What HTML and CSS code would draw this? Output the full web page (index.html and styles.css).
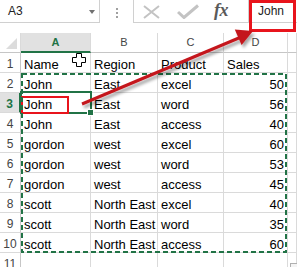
FILE: index.html
```html
<!DOCTYPE html>
<html>
<head>
<meta charset="utf-8">
<link rel="stylesheet" href="styles.css">
</head>
<body>
<div class="app">
  <div class="fbar">
    <div class="namebox"><span class="ref">A3</span><span class="dd"></span></div>
    <div class="dots"><i></i><i></i><i></i></div>
    <div class="formula">
      <div class="ficons">
        <svg class="ico-x" width="17" height="14" viewBox="0 0 17 14"><path d="M1 1 L16 13 M16 1 L1 13" stroke="#c3c3c3" stroke-width="2" fill="none"/></svg>
        <svg class="ico-check" width="22" height="15" viewBox="0 0 22 15"><path d="M1 8 L7 13.5 L21 1.5" stroke="#c3c3c3" stroke-width="3" fill="none"/></svg>
        <span class="fx">fx</span>
      </div>
      <div class="finput">John</div>
    </div>
  </div>

  <div class="sheet">
    <div class="corner"><span class="tri"></span></div>
    <div class="ch sel">A</div><div class="ch">B</div><div class="ch">C</div><div class="ch">D</div><div class="ch"></div>

    <div class="rh">1</div><div class="c">Name</div><div class="c">Region</div><div class="c">Product</div><div class="c">Sales</div><div class="c"></div>
    <div class="rh">2</div><div class="c">John</div><div class="c">East</div><div class="c">excel</div><div class="c num">50</div><div class="c"></div>
    <div class="rh sel">3</div><div class="c">John</div><div class="c">East</div><div class="c">word</div><div class="c num">56</div><div class="c"></div>
    <div class="rh">4</div><div class="c">John</div><div class="c">East</div><div class="c">access</div><div class="c num">40</div><div class="c"></div>
    <div class="rh">5</div><div class="c">gordon</div><div class="c">west</div><div class="c">excel</div><div class="c num">60</div><div class="c"></div>
    <div class="rh">6</div><div class="c">gordon</div><div class="c">west</div><div class="c">word</div><div class="c num">53</div><div class="c"></div>
    <div class="rh">7</div><div class="c">gordon</div><div class="c">west</div><div class="c">access</div><div class="c num">45</div><div class="c"></div>
    <div class="rh">8</div><div class="c">scott</div><div class="c">North East</div><div class="c">excel</div><div class="c num">40</div><div class="c"></div>
    <div class="rh">9</div><div class="c">scott</div><div class="c">North East</div><div class="c">word</div><div class="c num">35</div><div class="c"></div>
    <div class="rh">10</div><div class="c">scott</div><div class="c">North East</div><div class="c">access</div><div class="c num">60</div><div class="c"></div>
    <div class="rh">11</div><div class="c"></div><div class="c"></div><div class="c"></div><div class="c"></div><div class="c"></div>
  </div>

  <div class="active"><span class="handle"></span></div>
  <div class="redbox-cell"></div>
  <div class="redbox-formula"></div>
  <div class="paste"></div>

  <svg class="overlay" width="297" height="267" viewBox="0 0 297 267">
    <defs>
      <filter id="sh" x="-10%" y="-30%" width="130%" height="170%">
        <feDropShadow dx="2" dy="3" stdDeviation="1.5" flood-color="#000" flood-opacity="0.35"/>
      </filter>
    </defs>
    <rect x="22" y="74" width="264" height="178" fill="none" stroke="#217346" stroke-width="2" stroke-dasharray="5 3"/>
    <g filter="url(#sh)">
      <line x1="82" y1="104" x2="240" y2="37.5" stroke="#c4161c" stroke-width="3"/>
      <polygon points="253,31 241.6,45 234.8,29.4" fill="#c4161c"/>
    </g>
    <path d="M76.5 53.5 h5 v4 h4 v5 h-4 v4 h-5 v-4 h-4 v-5 h4 z" fill="#fff" stroke="#000" stroke-width="1"/>
  </svg>
</div>
</body>
</html>
```

FILE: styles.css
```css
html, body {
  margin: 0;
  padding: 0;
  background: #fff;
}
.app {
  position: relative;
  width: 297px;
  height: 267px;
  overflow: hidden;
  font-family: "Liberation Sans", Arial, sans-serif;
  color: #000;
}
.fbar {
  display: flex;
  height: 23px;
}
.namebox {
  width: 100px;
  box-sizing: border-box;
  border-right: 1px solid #d0d0d0;
  border-bottom: 1px solid #d0d0d0;
  display: flex;
  align-items: center;
  padding-left: 8px;
  font-size: 12px;
  color: #222;
}
.dd {
  margin-left: auto;
  margin-right: 4px;
  width: 0;
  height: 0;
  border-left: 3px solid transparent;
  border-right: 3px solid transparent;
  border-top: 4px solid #707070;
  margin-top: 2px;
}
.dots {
  width: 33px;
  display: flex;
  flex-direction: column;
  align-items: center;
  padding-top: 8px;
  gap: 2px;
  box-sizing: border-box;
}
.dots i {
  display: block;
  width: 2px;
  height: 2px;
  background: #a0a0a0;
}
.formula {
  flex: 1;
  display: flex;
  border-left: 1px solid #d0d0d0;
  border-bottom: 1px solid #d0d0d0;
}
.ficons {
  width: 114px;
  display: flex;
  align-items: center;
  padding-left: 9px;
  box-sizing: border-box;
}
.ico-x {
  margin-top: 1px;
}
.ico-check {
  margin-left: 17px;
}
.fx {
  margin-left: 15px;
  font-family: "Liberation Serif", "Times New Roman", serif;
  font-style: italic;
  font-weight: bold;
  font-size: 18px;
  color: #5a5a5a;
  letter-spacing: -0.5px;
  margin-top: -2px;
}
.finput {
  flex: 1;
  border-left: 1px solid #d0d0d0;
  padding-left: 9px;
  font-size: 12px;
  line-height: 22px;
  color: #222;
}
.sheet {
  margin-top: 10px;
  display: grid;
  grid-template-columns: 21px 70px 67px 66px 64px 1fr;
  grid-auto-rows: 20px;
}
.sheet > div {
  box-sizing: border-box;
  border-right: 1px solid #dadada;
  border-bottom: 1px solid #dadada;
  overflow: hidden;
  white-space: nowrap;
}
.corner {
  position: relative;
  border-bottom-color: #c6c6c6 !important;
}
.tri {
  position: absolute;
  right: 3px;
  bottom: 3px;
  width: 0;
  height: 0;
  border-left: 11px solid transparent;
  border-bottom: 11px solid #dcdcdc;
}
.ch {
  font-size: 11px;
  color: #444;
  text-align: center;
  line-height: 19px;
  border-bottom-color: #c6c6c6 !important;
}
.ch.sel {
  background: #e1e1e1;
  color: #217346;
  font-weight: bold;
  border-bottom: 2px solid #217346 !important;
  line-height: 18px;
}
.rh {
  font-size: 12px;
  color: #444;
  text-align: center;
  padding-top: 4px;
  line-height: 15px;
  border-right-color: #c6c6c6 !important;
}
.rh.sel {
  background: #e1e1e1;
  color: #217346;
  font-weight: bold;
  border-right: 2px solid #217346 !important;
}
.c {
  font-size: 13px;
  padding: 4px 3px 0 3px;
  line-height: 15px;
}
.num {
  text-align: right;
}
.active {
  position: absolute;
  left: 20px;
  top: 91px;
  width: 72px;
  height: 23px;
  box-sizing: border-box;
  border: 2px solid #217346;
}
.handle {
  position: absolute;
  right: -4px;
  bottom: -4px;
  width: 5px;
  height: 5px;
  background: #217346;
  border: 1px solid #fff;
}
.redbox-cell {
  position: absolute;
  left: 21px;
  top: 96px;
  width: 48px;
  height: 18px;
  box-sizing: border-box;
  border: 2px solid #e8141c;
}
.redbox-formula {
  position: absolute;
  left: 249px;
  top: 0;
  width: 47px;
  height: 32px;
  box-sizing: border-box;
  border: 3px solid #e8141c;
}
.paste {
  position: absolute;
  left: 290px;
  top: 263px;
  width: 10px;
  height: 10px;
  box-sizing: border-box;
  border: 1px solid #b0b0b0;
  background: #f4f4f4;
}
.overlay {
  position: absolute;
  left: 0;
  top: 0;
  pointer-events: none;
}
```
